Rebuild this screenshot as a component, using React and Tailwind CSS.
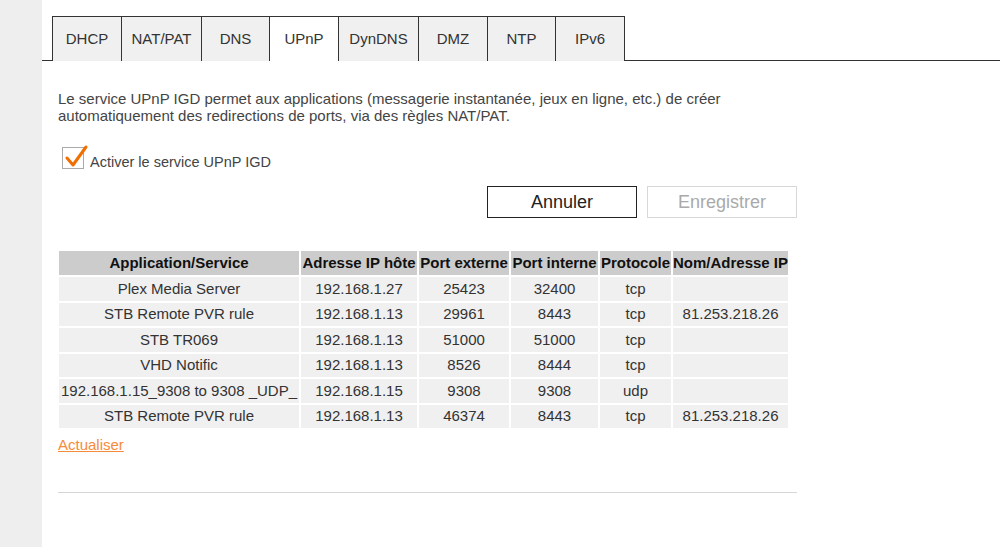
const tabs = [
  { label: "DHCP", w: "w-[69px]" },
  { label: "NAT/PAT", w: "w-[80px]" },
  { label: "DNS", w: "w-[68px]" },
  { label: "UPnP", w: "w-[69px]", active: true },
  { label: "DynDNS", w: "w-[80px]" },
  { label: "DMZ", w: "w-[69px]" },
  { label: "NTP", w: "w-[68px]" },
  { label: "IPv6", w: "w-[70px]", last: true },
];

const rows = [
  ["Plex Media Server", "192.168.1.27", "25423", "32400", "tcp", ""],
  ["STB Remote PVR rule", "192.168.1.13", "29961", "8443", "tcp", "81.253.218.26"],
  ["STB TR069", "192.168.1.13", "51000", "51000", "tcp", ""],
  ["VHD Notific", "192.168.1.13", "8526", "8444", "tcp", ""],
  ["192.168.1.15_9308 to 9308 _UDP_", "192.168.1.15", "9308", "9308", "udp", ""],
  ["STB Remote PVR rule", "192.168.1.13", "46374", "8443", "tcp", "81.253.218.26"],
];

const headers = [
  { label: "Application/Service", w: "w-[240px]" },
  { label: "Adresse IP hôte", w: "w-[116px]" },
  { label: "Port externe", w: "w-[90px]" },
  { label: "Port interne", w: "w-[87px]" },
  { label: "Protocole", w: "w-[71px]" },
  { label: "Nom/Adresse IP", w: "w-[115px]" },
];

export default function App() {
  return (
    <div className="flex h-[547px] w-[1000px] overflow-hidden bg-white font-['Liberation_Sans',Arial,sans-serif] text-[15px] text-[#333]">
      <div className="w-[42px] shrink-0 bg-[#eeeeee]" />
      <div className="flex-1 pt-[16px]">
        <div className="flex h-[45px] border-b border-[#333] pl-[10px]">
          {tabs.map((t) => (
            <div
              key={t.label}
              className={`-mb-px flex h-[45px] items-center justify-center border-l border-t border-[#333] ${t.w} ${
                t.last ? "border-r" : ""
              } ${t.active ? "bg-white" : "bg-[#f0f0f0]"}`}
            >
              {t.label}
            </div>
          ))}
        </div>

        <div className="pl-[16px]">
          <p className="mt-[29px] w-[739px] leading-[17px] text-[#444]">
            Le service UPnP IGD permet aux applications (messagerie instantanée, jeux en ligne, etc.) de créer
            <br />
            automatiquement des redirections de ports, via des règles NAT/PAT.
          </p>

          <label className="mt-[23px] ml-[4px] flex h-[22px] items-center gap-[6px]">
            <span className="relative h-[22px] w-[22px] shrink-0 border border-[#aaa] bg-white">
              <svg
                className="absolute left-[1px] top-[-5px]"
                width="26"
                height="26"
                viewBox="0 0 26 26"
                fill="none"
              >
                <path
                  d="M3 15 L9 22 L22 4"
                  stroke="#f16e00"
                  strokeWidth="3"
                  strokeLinecap="round"
                  strokeLinejoin="round"
                />
              </svg>
            </span>
            <span className="relative top-[4px] text-[14.5px] leading-[17px] text-[#444]">
              Activer le service UPnP IGD
            </span>
          </label>

          <div className="mt-[17px] flex w-[739px] justify-end gap-[10px]">
            <button className="h-[32px] w-[150px] border border-[#222] bg-white text-[18px] text-[#222]">
              Annuler
            </button>
            <button className="h-[32px] w-[150px] border border-[#d8d8d8] bg-white text-[18px] text-[#aaa]">
              Enregistrer
            </button>
          </div>

          <table className="mt-[31px] -ml-[1px] border-separate border-spacing-[2px] text-center leading-[18px]">
            <thead>
              <tr>
                {headers.map((h) => (
                  <th
                    key={h.label}
                    className={`h-[24px] whitespace-nowrap bg-[#cccccc] p-0 font-bold text-[#111] ${h.w}`}
                  >
                    {h.label}
                  </th>
                ))}
              </tr>
            </thead>
            <tbody>
              {rows.map((r, i) => (
                <tr key={i}>
                  {r.map((c, j) => (
                    <td key={j} className="h-[23.5px] whitespace-nowrap bg-[#f0f0f0] p-0 text-[#333]">
                      {c}
                    </td>
                  ))}
                </tr>
              ))}
            </tbody>
          </table>

          <a href="#" className="mt-[6px] inline-block leading-[17px] text-[#f68b3c] underline">
            Actualiser
          </a>

          <div className="mt-[35px] h-px w-[739px] bg-[#d6d6d6]" />
        </div>
      </div>
    </div>
  );
}
